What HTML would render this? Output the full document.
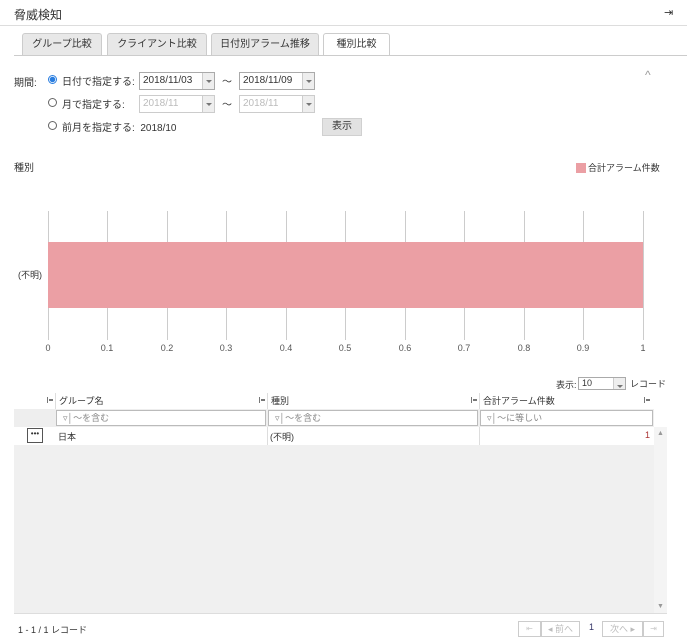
<!DOCTYPE html>
<html><head><meta charset="utf-8"><style>
*{box-sizing:border-box;margin:0;padding:0}
body{width:687px;height:640px;background:#fff;font-family:"Liberation Sans","Noto Sans CJK JP",sans-serif;font-size:10px;color:#333;position:relative;overflow:hidden}
.a{position:absolute}
.tab{position:absolute;top:33px;height:22px;border:1px solid #ccc;border-bottom:none;background:#e8e8e8;font-size:10px;text-align:center;line-height:21px;border-radius:3px 3px 0 0}
.sel{position:absolute;height:18px;border:1px solid #aaa;font-size:10px;line-height:16px;padding-left:3px;background:#fff}
.sel i{position:absolute;right:0;top:0;width:12px;height:16px;border-left:1px solid #ccc;background:#eee}
.sel i:after{content:"";position:absolute;left:3px;top:7px;border:3px solid transparent;border-top:3px solid #777}
.dis{color:#bbb;border-color:#ccc}
.rad{position:absolute;width:9px;height:9px;border:1px solid #666;border-radius:50%}
.g{position:absolute;top:211px;width:1px;height:129px;background:#ccc}
.xl{position:absolute;top:343px;font-size:9px;color:#555;width:30px;text-align:center}
.pin{position:absolute;top:397px;width:6px;height:6px;border-left:1px solid #777;background:linear-gradient(#777,#777) 1px 2px/5px 2px no-repeat}
.f{position:absolute;top:410px;height:16px;background:#fff;border:1px solid #bbb;font-size:9px;color:#888;padding-left:6px;line-height:14px}
</style></head><body>
<div class="a" style="left:14px;top:6px;font-size:12px;color:#333">脅威検知</div>
<div class="a" style="left:664px;top:6px;font-size:11px">⇥</div>
<div class="a" style="left:0;top:25px;width:687px;height:1px;background:#ddd"></div>
<div class="tab" style="left:22px;width:80px">グループ比較</div>
<div class="tab" style="left:107px;width:100px">クライアント比較</div>
<div class="tab" style="left:211px;width:108px">日付別アラーム推移</div>
<div class="tab" style="left:323px;width:67px;background:#fff;height:23px">種別比較</div>
<div class="a" style="left:14px;top:55px;width:673px;height:1px;background:#ccc"></div>

<div class="a" style="left:14px;top:74px">期間:</div>
<div class="rad" style="left:48px;top:75px;border-color:#2a7ee0;background:radial-gradient(#2a7ee0 2.5px,#fff 3px)"></div>
<div class="a" style="left:62px;top:73px;font-size:10px">日付で指定する:</div>
<div class="sel" style="left:139px;top:72px;width:76px">2018/11/03<i></i></div>
<div class="a" style="left:222px;top:73px">〜</div>
<div class="sel" style="left:239px;top:72px;width:76px">2018/11/09<i></i></div>
<div class="rad" style="left:48px;top:98px"></div>
<div class="a" style="left:62px;top:96px;font-size:10px">月で指定する:</div>
<div class="sel dis" style="left:139px;top:95px;width:76px">2018/11<i></i></div>
<div class="a" style="left:222px;top:96px">〜</div>
<div class="sel dis" style="left:239px;top:95px;width:76px">2018/11<i></i></div>
<div class="rad" style="left:48px;top:121px"></div>
<div class="a" style="left:62px;top:119px;font-size:10px">前月を指定する: &nbsp;2018/10</div>
<div class="a" style="left:322px;top:118px;width:40px;height:18px;background:#e2e2e2;border:1px solid #d0d0d0;text-align:center;line-height:16px;font-size:10px">表示</div>
<div class="a" style="left:645px;top:68px;color:#999;font-size:12px">^</div>

<div class="a" style="left:14px;top:159px;font-size:10px">種別</div>
<div class="a" style="left:576px;top:163px;width:10px;height:10px;background:#eb9fa4"></div>
<div class="a" style="left:588px;top:161px;font-size:9px">合計アラーム件数</div>
<div class="g" style="left:48px"></div><div class="g" style="left:107px"></div><div class="g" style="left:167px"></div><div class="g" style="left:226px"></div><div class="g" style="left:286px"></div><div class="g" style="left:345px"></div><div class="g" style="left:405px"></div><div class="g" style="left:464px"></div><div class="g" style="left:524px"></div><div class="g" style="left:583px"></div><div class="g" style="left:643px"></div>
<div class="a" style="left:48px;top:242px;width:595px;height:66px;background:#eb9fa4"></div>
<div class="a" style="left:18px;top:268px;font-size:9px">(不明)</div>
<div class="xl" style="left:33px">0</div><div class="xl" style="left:92px">0.1</div><div class="xl" style="left:152px">0.2</div><div class="xl" style="left:211px">0.3</div><div class="xl" style="left:271px">0.4</div><div class="xl" style="left:330px">0.5</div><div class="xl" style="left:390px">0.6</div><div class="xl" style="left:449px">0.7</div><div class="xl" style="left:509px">0.8</div><div class="xl" style="left:568px">0.9</div><div class="xl" style="left:628px">1</div>

<div class="a" style="left:556px;top:378px;font-size:9px">表示:</div>
<div class="sel" style="left:578px;top:377px;width:48px;height:13px;line-height:11px;font-size:9px">10<i style="height:11px"></i></div>
<div class="a" style="left:630px;top:377px;font-size:9px">レコード</div>

<div class="pin" style="left:47px"></div><div class="pin" style="left:259px"></div><div class="pin" style="left:471px"></div><div class="pin" style="left:644px"></div>
<div class="a" style="left:55px;top:393px;width:212px;height:16px;font-size:9px;line-height:16px;padding-left:3px;border-left:1px solid #ddd">グループ名</div>
<div class="a" style="left:267px;top:393px;width:212px;height:16px;font-size:9px;line-height:16px;padding-left:3px;border-left:1px solid #ddd">種別</div>
<div class="a" style="left:479px;top:393px;width:174px;height:16px;font-size:9px;line-height:16px;padding-left:3px;border-left:1px solid #ddd">合計アラーム件数</div>
<div class="a" style="left:14px;top:409px;width:640px;height:18px;background:#eee"></div>
<div class="f" style="left:56px;width:210px">▿│～を含む</div>
<div class="f" style="left:268px;width:210px">▿│～を含む</div>
<div class="f" style="left:480px;width:173px">▿│～に等しい</div>
<div class="a" style="left:14px;top:427px;width:640px;height:18px;background:#fff"></div>
<div class="a" style="left:27px;top:428px;width:16px;height:15px;border:1px solid #555;font-size:8px;text-align:center;line-height:10px">•••</div>
<div class="a" style="left:58px;top:430px;font-size:9px">日本</div>
<div class="a" style="left:267px;top:427px;width:1px;height:18px;background:#ddd"></div>
<div class="a" style="left:270px;top:430px;font-size:9px">(不明)</div>
<div class="a" style="left:479px;top:427px;width:1px;height:18px;background:#ddd"></div>
<div class="a" style="left:645px;top:430px;font-size:9px;color:#a33">1</div>
<div class="a" style="left:14px;top:445px;width:640px;height:168px;background:#f0f0f0"></div>
<div class="a" style="left:654px;top:427px;width:13px;height:186px;background:#f4f4f4"></div>
<div class="a" style="left:657px;top:430px;font-size:7px;color:#999">▲</div>
<div class="a" style="left:657px;top:603px;font-size:7px;color:#999">▼</div>
<div class="a" style="left:14px;top:613px;width:653px;height:1px;background:#ddd"></div>
<div class="a" style="left:18px;top:623px;font-size:9px">1 - 1 / 1 レコード</div>
<div class="a" style="left:518px;top:621px;width:23px;height:16px;border:1px solid #ccc;color:#ccc;font-size:8px;text-align:center;line-height:14px">⇤</div>
<div class="a" style="left:541px;top:621px;width:39px;height:16px;border:1px solid #ccc;color:#bbb;font-size:9px;text-align:center;line-height:14px">◂ 前へ</div>
<div class="a" style="left:589px;top:622px;font-size:9px;color:#336">1</div>
<div class="a" style="left:602px;top:621px;width:41px;height:16px;border:1px solid #ccc;color:#bbb;font-size:9px;text-align:center;line-height:14px">次へ ▸</div>
<div class="a" style="left:643px;top:621px;width:21px;height:16px;border:1px solid #ccc;color:#ccc;font-size:8px;text-align:center;line-height:14px">⇥</div>
</body></html>
